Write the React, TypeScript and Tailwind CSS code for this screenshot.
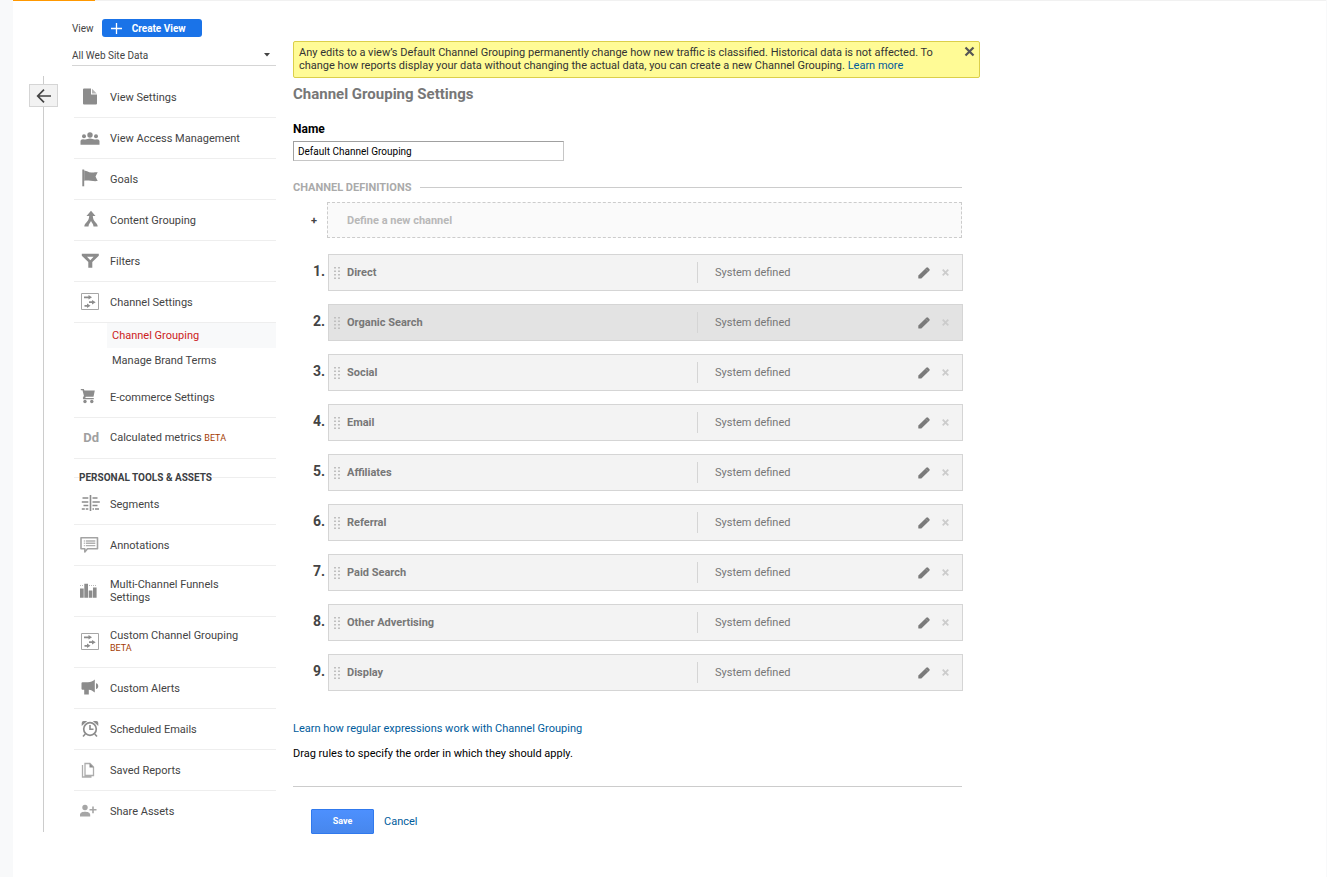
import { useState, type ReactNode } from 'react'
import clsx from 'clsx'

interface NavItem {
  label: string
  icon: ReactNode
  beta?: 'inline' | 'below'
  children?: string[]
}

const channels = [
  'Direct',
  'Organic Search',
  'Social',
  'Email',
  'Affiliates',
  'Referral',
  'Paid Search',
  'Other Advertising',
  'Display',
]

function Icon({ children }: { children: ReactNode }) {
  return (
    <svg className="size-5 shrink-0 text-[#8c8c8c]" viewBox="0 0 20 20" fill="currentColor" aria-hidden="true">
      {children}
    </svg>
  )
}

const channelIcon = (
  <Icon>
    <path d="M1.500 1.500h17v16h-17z" fill="none" stroke="#a6a6a6" />
    <path d="M4 4.500h4.500V3L12 5.300 8.500 7.600V6.200H4zM9 9.300h3V7.900l3.700 2.300-3.700 2.300V11H9zM4.500 13H7v-1.400l3.500 2.200L7 16v-1.300H4.500z" />
  </Icon>
)

const viewItems: NavItem[] = [
  {
    label: 'View Settings',
    icon: (
      <Icon>
        <path d="M4 1.500h7v6h6v9a1 1 0 0 1-1 1H4a1 1 0 0 1-1-1v-14a1 1 0 0 1 1-1z" />
        <path d="M12 1.700v4.800h4.700z" fill="#b5b5b5" />
      </Icon>
    ),
  },
  {
    label: 'View Access Management',
    icon: (
      <Icon>
        <circle cx="10" cy="7" r="2.700" />
        <circle cx="4" cy="8.300" r="2" />
        <circle cx="16" cy="8.300" r="2" />
        <path d="M.5 16.700v-3.500c0-1.300 1-2 2.500-2 1 0 1.500.3 2.500.3 1.200 0 2.500-1 4.500-1s3.300 1 4.500 1c1 0 1.500-.3 2.500-.3 1.500 0 2.500.7 2.500 2v3.500z" />
      </Icon>
    ),
  },
  {
    label: 'Goals',
    icon: (
      <Icon>
        <path d="M2.300.5h1.900v16.800H2.300z" />
        <path d="M4.200 1.500c3 .3 4 2 7 2 2.500 0 4-.5 6.500-.2l-2.200 4.200 2.200 4.500c-3 .3-4.500 0-7-.2s-4-.3-6.500-.1z" />
      </Icon>
    ),
  },
  {
    label: 'Content Grouping',
    icon: (
      <Icon>
        <path d="M11 .8 15.500 6h-2.700c.2 2.700.7 4 2.200 5.700 1 1.200 2.700 2.500 2.700 4.800h-4.200c0-2.500-1.800-3.800-2.500-5.500-.7 1.700-2.500 3-2.500 5.500H4.300c0-2.300 1.700-3.600 2.700-4.800C8.500 10 9 8.700 9.200 6H6.500z" />
      </Icon>
    ),
  },
  {
    label: 'Filters',
    icon: (
      <Icon>
        <path
          d="M1.800 2.700h17v2L12.300 11v5.700H8.300V11L1.800 4.700zm5.200 3L10.300 9.200l3.300-3.500z"
          fillRule="evenodd"
        />
      </Icon>
    ),
  },
  { label: 'Channel Settings', icon: channelIcon, children: ['Channel Grouping', 'Manage Brand Terms'] },
  {
    label: 'E-commerce Settings',
    icon: (
      <Icon>
        <path d="M.8 2h3l.6 1.500h10.400L13.500 9.700H5.800l-.6 1.300h8.600v1.300H3.300L2.800 11l1.100-2.200L2.500 3.300H.8z" />
        <circle cx="5" cy="14.500" r="1.700" />
        <circle cx="11.800" cy="14.500" r="1.700" />
      </Icon>
    ),
  },
  {
    label: 'Calculated metrics',
    icon: <span className="w-5 shrink-0 pr-px text-right text-[13px]/[20px] font-bold text-[#a0a0a0]">Dd</span>,
    beta: 'inline',
  },
]

const personalItems: NavItem[] = [
  {
    label: 'Segments',
    icon: (
      <Icon>
        <path
          d="M10.500 1v16M2.500 4h5.800M1.800 8h6.500M3.500 11.500h4.800M1.800 15h3M5.800 15h2.500M12.500 4h5M12.500 8h7.300M12.500 11.500h5M12.500 15h1.500M15 15h4"
          fill="none"
          stroke="currentColor"
          strokeWidth="1.600"
        />
      </Icon>
    ),
  },
  {
    label: 'Annotations',
    icon: (
      <Icon>
        <path d="M1 2.800h16.500v11H7.500L4.800 17v-3.200H1z" fill="none" stroke="#a3a3a3" strokeWidth="1.600" strokeLinejoin="round" />
        <path d="M3.800 6h1M5.800 6h9.500M3.800 8.300h1M5.800 8.300h9.500M3.800 10.600h1M5.800 10.600h9.500" stroke="#b0b0b0" strokeWidth="1.400" />
      </Icon>
    ),
  },
  {
    label: 'Multi-Channel Funnels Settings',
    icon: (
      <Icon>
        <path d="M0 7.500h3.700v9.300H0zM4.300 2.700H8v14.100H4.300zM8.700 9.500h3.700v7.300H8.700zM13 6.500h3.600v10.300H13z" />
        <path d="M0 4.500h4M9 4.500h7" stroke="#bbb" strokeDasharray="1 1" />
      </Icon>
    ),
  },
  { label: 'Custom Channel Grouping', icon: channelIcon, beta: 'below' },
  {
    label: 'Custom Alerts',
    icon: (
      <Icon>
        <path d="M2.500 4.300H8c3 0 4.500-.8 6.800-2.700v13c-2.300-1.800-3.500-2.600-6-2.800v4.700H4.200v-4.700H2.500a1 1 0 0 1-1-1V5.300a1 1 0 0 1 1-1zM16 5.300c3 .5 3 5.300 0 5.800z" />
      </Icon>
    ),
  },
  {
    label: 'Scheduled Emails',
    icon: (
      <Icon>
        <circle cx="10" cy="10" r="6.300" fill="none" stroke="currentColor" strokeWidth="1.700" />
        <path d="M10 6v4.200h3.500M5.300 15 3 17.500M14.700 15l2.300 2.500" fill="none" stroke="currentColor" strokeWidth="1.600" />
        <path d="M1.700 7V4a2 2 0 0 1 2-2h3.500zM18.300 7V4a2 2 0 0 0-2-2h-3.500z" />
      </Icon>
    ),
  },
  {
    label: 'Saved Reports',
    icon: (
      <Icon>
        <path d="M5 3.500h5L13.500 7v8.500H5zM2.500 5v12h9" fill="none" stroke="#adadad" strokeWidth="1.300" />
        <path d="M9.500 3.300v4.200h4.200z" />
      </Icon>
    ),
  },
  {
    label: 'Share Assets',
    icon: (
      <Icon>
        <g fill="#a6a6a6">
          <circle cx="5" cy="6.500" r="2.700" />
          <path d="M0 15.500v-1.700C0 11.500 2.500 10.700 5 10.700s5.200.8 5.200 3.100v1.700zM12.200 5.500h1.600V8h2.700v1.600h-2.700v2.700h-1.600V9.600H9.500V8h2.700z" />
        </g>
      </Icon>
    ),
  },
]

function NavRow({ item }: { item: NavItem }) {
  return (
    <li>
      <a
        href="#"
        className="ml-0.5 flex min-h-[41px] items-center gap-2.5 border-b border-[#eeeeee] py-3 pr-5 pl-1.5 text-[#444444]"
      >
        <span className="-my-1 flex">{item.icon}</span>
        <span>
          {item.label}
          {item.beta === 'inline' && ' '}
          {item.beta && (
            <span className={clsx('text-[9px] text-[#a43c05]', item.beta === 'below' && 'block')}>BETA</span>
          )}
        </span>
      </a>
      {item.children && (
        <ul className="mb-1 ml-[35px]">
          {item.children.map((child, i) => (
            <li key={child}>
              <a
                href="#"
                className={clsx('block py-1.5 pl-[5px]', i === 0 ? 'bg-[#f8f9fa] text-[#cc2222]' : 'text-[#444444]')}
              >
                {child}
              </a>
            </li>
          ))}
        </ul>
      )}
    </li>
  )
}

function Sidebar() {
  return (
    <div className="flex shrink-0 gap-3.5 pl-4">
      {/* Rail with the back button */}
      <div className="flex w-[29px] flex-col items-center pt-[75px]">
        <div className="h-2 w-px bg-[#cccccc]" />
        <button
          aria-label="Back"
          className="flex h-[23px] w-full items-center justify-center border border-[#d5d5d5] bg-[#f2f2f2] text-[#444444]"
        >
          <svg className="h-4 w-4" viewBox="0 0 16 16" fill="none" stroke="currentColor" strokeWidth="1.700">
            <path d="M15 8H2M8 1.700 1.700 8 8 14.300" />
          </svg>
        </button>
        <div className="w-px flex-1 bg-[#cccccc]" />
      </div>

      <div className="w-[204px] pt-[18px]">
        <div className="flex items-center gap-2 text-[10px] text-[#444444]">
          <span>View</span>
          <button className="flex h-[18px] w-[100px] items-center gap-2.5 rounded-[3px] bg-[#1a73e8] pl-[9px] font-bold text-white">
            <svg className="size-[11px]" viewBox="0 0 11 11" stroke="currentColor" strokeWidth="1.300" aria-hidden="true">
              <path d="M5.500 0v11M0 5.500h11" />
            </svg>
            Create View
          </button>
        </div>

        <div className="mt-2 flex items-center border-b border-[#d5d5d5]">
          <select
            aria-label="View"
            className="h-5 flex-1 appearance-none bg-transparent text-[10px] text-[#444444] outline-none"
          >
            <option>All Web Site Data</option>
          </select>
          <svg className="pointer-events-none mr-1.5 h-1 w-1.5 text-[#444444]" viewBox="0 0 6 4" fill="currentColor">
            <path d="M0 0h6L3 3.500z" />
          </svg>
        </div>

        <nav className="mt-[11px]">
          <ul>
            {viewItems.map(item => (
              <NavRow key={item.label} item={item} />
            ))}
          </ul>
          <div className="ml-0.5 flex items-center pt-3">
            <span className="h-px w-[5px] bg-[#eeeeee]" />
            <h2 className="text-[10px]/[13px] font-bold text-[#3c4043]">PERSONAL TOOLS &amp; ASSETS</h2>
            <span className="h-px flex-1 bg-[#eeeeee]" />
          </div>
          <ul className="[&>li:last-child>a]:border-transparent">
            {personalItems.map(item => (
              <NavRow key={item.label} item={item} />
            ))}
          </ul>
        </nav>
      </div>
    </div>
  )
}

function ChannelRow({ name, index }: { name: string; index: number }) {
  return (
    <li className="flex">
      <span className="w-[35px] shrink-0 pt-2 pr-[3px] text-right text-[14px]/[18px] font-bold text-[#444444]">
        {index + 1}.
      </span>
      <div
        className={clsx(
          'flex h-[37px] flex-1 items-center border border-[#d5d5d5] text-[#777777]',
          index === 1 ? 'bg-[#e3e3e3]' : 'bg-[#f3f3f3]',
        )}
      >
        <svg className="ml-[5px] h-3 w-1.5 text-[#c0c0c0]" viewBox="0 0 6 12" fill="currentColor" aria-hidden="true">
          <path d="M0 0h2v1.500H0zM4 0h2v1.500H4zM0 3.500h2V5H0zM4 3.500h2V5H4zM0 7h2v1.500H0zM4 7h2v1.500H4zM0 10.500h2V12H0zM4 10.500h2V12H4z" />
        </svg>
        <span className="ml-[7px] flex-1 font-bold">{name}</span>
        <span className="flex h-[21px] w-[221px] items-center border-l border-[#d5d5d5] pl-[17px]">System defined</span>
        <button aria-label={`Edit ${name}`} className="text-[#7a7a7a]">
          <svg className="size-3" viewBox="0 0 12 12" fill="currentColor">
            <path d="M.3 8.600 8.300.7a1.300 1.300 0 0 1 1.800 0l1.200 1.200a1.300 1.300 0 0 1 0 1.800l-8 7.800H.9a.6.6 0 0 1-.6-.6z" />
            <path d="m7.500 1.800 2.800 2.800" stroke="#aaa" strokeWidth=".6" />
          </svg>
        </button>
        <button aria-label={`Remove ${name}`} className="mr-[13px] ml-3 text-[#cccccc]">
          <svg className="size-[7px]" viewBox="0 0 7 7" stroke="currentColor" strokeWidth="1.800">
            <path d="m.7.7 5.600 5.600M6.300.7.7 6.300" />
          </svg>
        </button>
      </div>
    </li>
  )
}

function SettingsForm() {
  const [name, setName] = useState('Default Channel Grouping')

  return (
    <form className="max-w-[670px]" onSubmit={e => e.preventDefault()}>
      <h1 className="mt-1.5 text-[15px]/[20px] font-bold text-[#777777]">Channel Grouping Settings</h1>

      <label htmlFor="grouping-name" className="mt-4 block text-[12px]/[18px] font-bold text-black">
        Name
      </label>
      <input
        id="grouping-name"
        value={name}
        onChange={e => setName(e.target.value)}
        className="mt-[3px] block h-5 w-[271px] border border-[#c6c6c6] border-t-[#a0a0a0] border-l-[#a0a0a0] px-1 text-[10px] text-black outline-none"
      />

      <div className="mt-5 flex items-center gap-[9px] pr-px">
        <h2 className="font-bold text-[#aaaaaa]">CHANNEL DEFINITIONS</h2>
        <span className="h-px flex-1 bg-[#cccccc]" />
      </div>

      <div className="mt-2 flex items-center pr-px">
        <span className="w-[34px] shrink-0 pr-2.5 text-right font-bold text-[#444444]">+</span>
        <button className="h-9 flex-1 border border-dashed border-[#cccccc] bg-[#fafafa] pl-[19px] text-left font-bold text-[#b8b8b8]">
          Define a new channel
        </button>
      </div>

      <ol className="mt-4 space-y-[13px]">
        {channels.map((channel, i) => (
          <ChannelRow key={channel} name={channel} index={i} />
        ))}
      </ol>

      <a href="#" className="mt-[31px] block text-[#005c9c]">
        Learn how regular expressions work with Channel Grouping
      </a>
      <p className="mt-3 text-black">Drag rules to specify the order in which they should apply.</p>

      <div className="mt-[26px] mr-px flex items-center gap-2.5 border-t border-[#cccccc] pt-[22px] pl-[18px]">
        <button className="h-[25px] w-[63px] rounded-[1px] border border-[#3079ed] bg-linear-to-b from-[#4d90fe] to-[#4787ed] text-[9px] font-bold text-white">
          Save
        </button>
        <a href="#" className="text-[#005c9c]">
          Cancel
        </a>
      </div>
    </form>
  )
}

export default function App() {
  return (
    <div className="min-h-screen border-r border-l-[13px] border-[#f8f9fa] bg-white font-[Roboto,sans-serif] text-[11px]/[13px]">
      <div className="flex bg-[#f1f1f1]">
        <div className="h-px w-[82px] bg-[#ff9800]" />
      </div>

      <div className="flex items-start gap-[17px]">
        <Sidebar />
        <main className="max-w-[687px] flex-1 pt-10">
          <div className="flex items-start justify-between rounded-[2px] border border-[#dbcf4a] bg-[#fffb96] pt-1 pr-1 pb-[5px] pl-[5px] text-[#333333]">
            <p>
              Any edits to a view’s Default Channel Grouping permanently change how new traffic is classified. Historical
              data is not affected. To change how reports display your data without changing the actual data, you can
              create a new Channel Grouping.{' '}
              <a href="#" className="text-[#005c9c]">
                Learn more
              </a>
            </p>
            <button aria-label="Dismiss" className="shrink-0 text-[#555555]">
              <svg className="size-[11px]" viewBox="0 0 11 11" stroke="currentColor" strokeWidth="2.200">
                <path d="m1.500 1.500 8 8M9.500 1.500l-8 8" />
              </svg>
            </button>
          </div>
          <SettingsForm />
        </main>
      </div>
    </div>
  )
}
